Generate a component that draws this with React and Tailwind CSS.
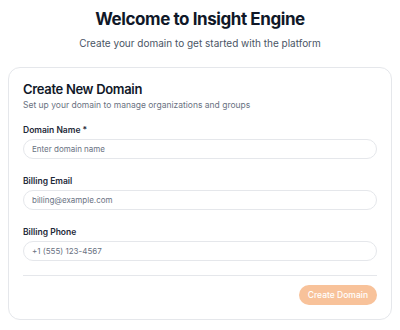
import React from 'react';

const Field = ({ label, placeholder }) => (
  <div className="flex flex-col">
    <label className="text-[8.5px] font-semibold text-gray-800 mb-[3px] leading-[12px]">{label}</label>
    <input
      className="h-[20px] w-full rounded-full border border-gray-200 bg-white px-[8px] text-[8px] text-gray-900 placeholder:text-gray-500 outline-none"
      placeholder={placeholder}
    />
  </div>
);

export default function App() {
  return (
    <div className="min-h-[330px] w-[400px] bg-white" style={{ fontFamily: 'Inter, "Noto Sans", sans-serif' }}>
      <div className="flex flex-col items-center pt-[9px]">
        <h1 className="text-[17px] font-bold text-gray-900 leading-[20px] tracking-tight">Welcome to Insight Engine</h1>
        <p className="mt-[7px] text-[10px] text-gray-600 leading-[14px]">Create your domain to get started with the platform</p>
      </div>

      <div className="mx-[8px] mt-[17px] rounded-[12px] border border-gray-200 px-[14px] pt-[13px] pb-[14px]">
        <h2 className="text-[13px] font-semibold text-gray-900 leading-[16px] tracking-tight">Create New Domain</h2>
        <p className="mt-[3px] text-[8.5px] text-gray-500 leading-[11px]">Set up your domain to manage organizations and groups</p>

        <div className="mt-[13px] flex flex-col gap-[16px]">
          <Field label="Domain Name *" placeholder="Enter domain name" />
          <Field label="Billing Email" placeholder="billing@example.com" />
          <Field label="Billing Phone" placeholder="+1 (555) 123-4567" />
        </div>

        <div className="mt-[14px] border-t border-gray-200 pt-[9px] flex justify-end">
          <button className="h-[20px] rounded-full bg-[#f8c29a] px-[9px] text-[8.5px] font-medium text-white">Create Domain</button>
        </div>
      </div>
    </div>
  );
}
